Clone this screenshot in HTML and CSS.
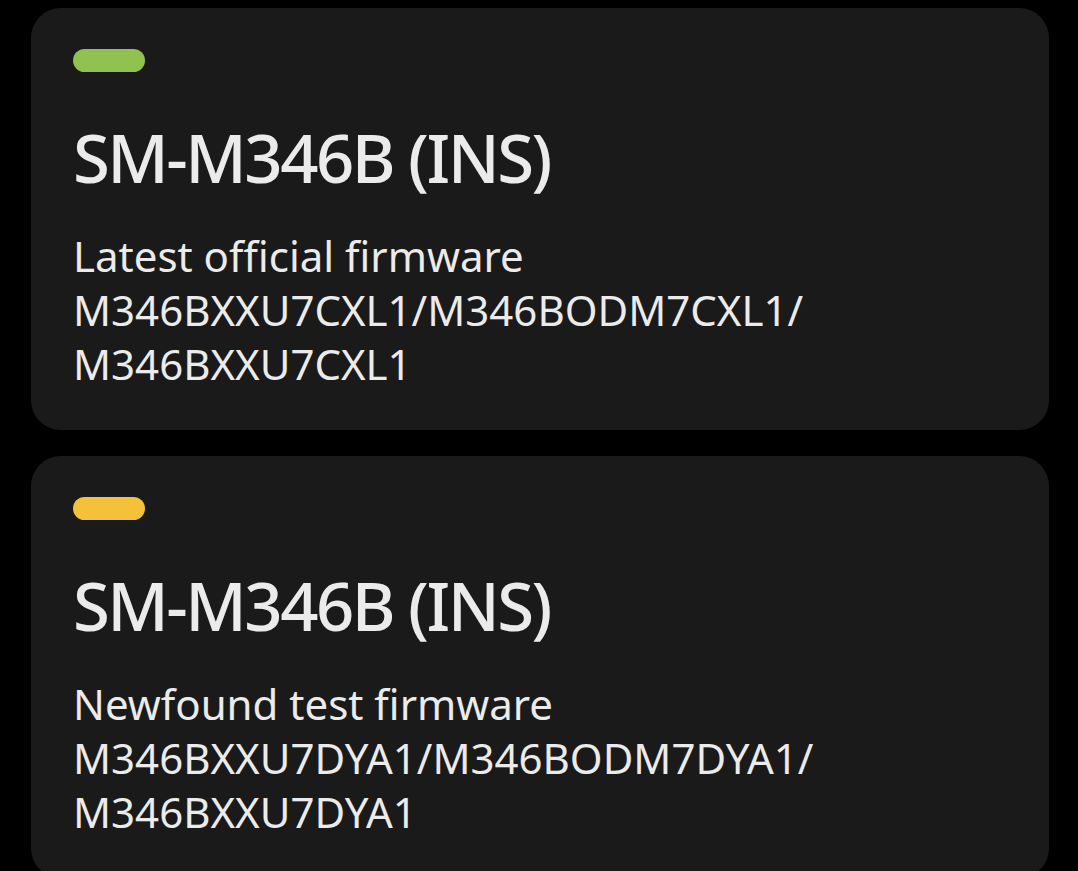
FILE: index.html
```html
<!DOCTYPE html>
<html>
<head>
<meta charset="utf-8">
<link rel="stylesheet" href="styles.css">
</head>
<body>
<div class="list">
  <section class="card">
    <div class="pill pill-green"></div>
    <h1 class="title">SM-M346B (INS)</h1>
    <p class="label">Latest official firmware</p>
    <p class="fw">M346BXXU7CXL1/M346BODM7CXL1/<br>M346BXXU7CXL1</p>
  </section>
  <section class="card">
    <div class="pill pill-yellow"></div>
    <h1 class="title">SM-M346B (INS)</h1>
    <p class="label">Newfound test firmware</p>
    <p class="fw">M346BXXU7DYA1/M346BODM7DYA1/<br>M346BXXU7DYA1</p>
  </section>
</div>
</body>
</html>
```

FILE: styles.css
```css
html, body {
  margin: 0;
  padding: 0;
  background: #000;
  height: 100%;
  overflow: hidden;
}
body {
  font-family: "Noto Sans", "Open Sans", sans-serif;
  color: #ebebeb;
}
.list {
  display: flex;
  flex-direction: column;
  gap: 26px;
  padding: 8px 29px 0 31px;
}
.card {
  background: #1a1a1a;
  border-radius: 30px;
  padding: 41px 42px 39px 42px;
}
.pill {
  width: 72px;
  height: 23px;
  border-radius: 12px;
}
.pill-green { background: #8fc24f; }
.pill-yellow { background: #f5c13b; }
.title {
  margin: 45px 0 0 0;
  font-size: 67px;
  line-height: 80px;
  font-weight: 500;
  letter-spacing: -2.5px;
}
.label {
  margin: 32px 0 0 0;
  font-size: 42px;
  line-height: 54px;
}
.fw {
  margin: 0;
  font-size: 42px;
  line-height: 54px;
}
```
